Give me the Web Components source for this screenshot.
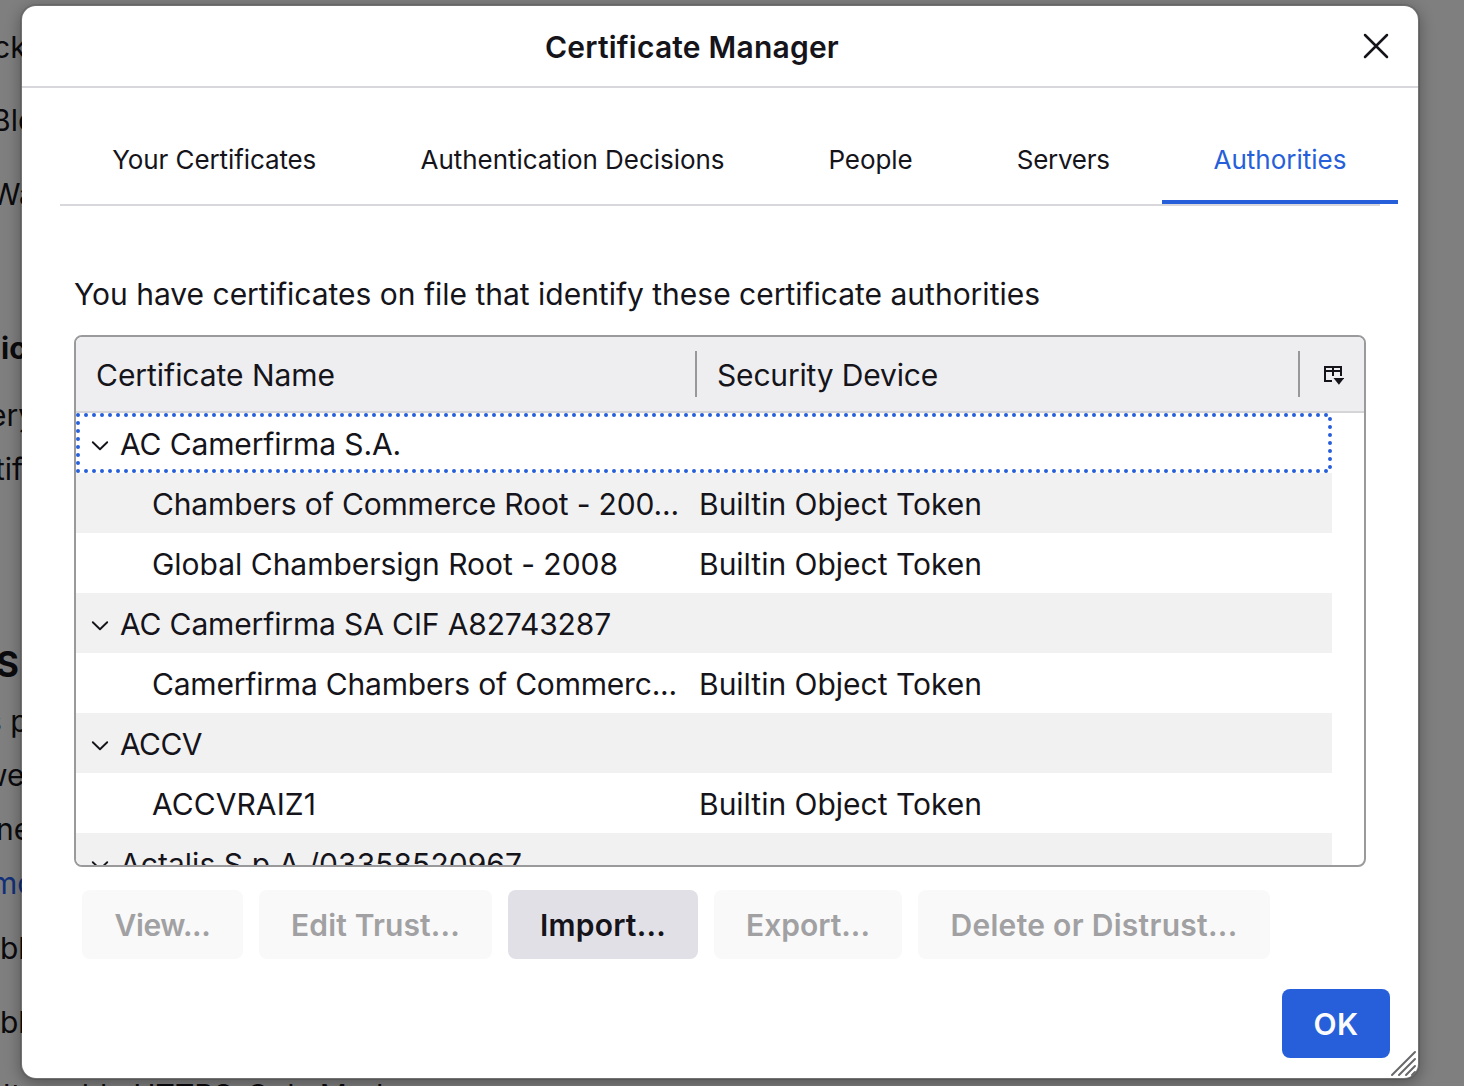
<!DOCTYPE html>
<html lang="en">
<head>
<meta charset="utf-8">
<title>Certificate Manager</title>
<style>
html,body{margin:0;height:1086px;overflow:hidden;background:#7f7f7f;font-family:Inter,"Liberation Sans",sans-serif;font-size:30px;font-weight:440;color:#15141a}
</style>
</head>
<body>
<cert-app></cert-app>
<script>
// Text run whose tracking is adjusted so that it spans the given width.
class FitText extends HTMLElement{
  connectedCallback(){
    if(!this.shadowRoot)this.attachShadow({mode:'open'}).innerHTML='<style>:host{display:inline-block;white-space:pre;line-height:1}span{display:inline-block}</style><span><slot></slot></span>';
    const s=this.shadowRoot.querySelector('span'),w=+this.getAttribute('w');
    if(w){const n=this.textContent.length;s.style.letterSpacing=((w-s.getBoundingClientRect().width)/n)+'px';}
  }
}
class PageBackdrop extends HTMLElement{
  connectedCallback(){
    const lines=[['ck',47,-7],['Blo',120,-9],['Wa',194,-9],['ic',348,1,'b'],['ery',415,-11],['tif',469,-5],['S',664,-4,'h'],['s p',721,-14],['we',775,-17],['ne',829,-4],['more',883,-9,'l'],['bl',948,0],['bl',1022,0],["Don't enable HTTPS-Only Mode",1095,-55]];
    let y=0,h='';
    for(const [t,c,x,k=''] of lines){h+=`<div class="${k}" style="margin-top:${c-20-y}px;text-indent:${x}px">${t}</div>`;y=c+20;}
    this.attachShadow({mode:'open'}).innerHTML=`<style>:host{display:block;height:1086px;overflow:hidden;background:#7f7f7f;color:#0b0a0d}div{height:40px;line-height:40px;white-space:nowrap}.b{font-weight:650}.h{font-weight:650;font-size:35px}.l{color:#12307a}</style><section style="display:flow-root">${h}</section>`;
  }
}
class DialogTab extends HTMLElement{
  connectedCallback(){
    this.attachShadow({mode:'open'}).innerHTML='<style>:host{display:flex;flex:none;box-sizing:border-box;height:116px;padding-top:31px;justify-content:center;align-items:center;font-size:26px;border-bottom:4px solid transparent}:host([selected]){color:#265fd9;border-color:#265fd9}</style><slot></slot>';
  }
}
class TreeRow extends HTMLElement{
  connectedCallback(){
    const child=this.hasAttribute('child'),n=this.getAttribute('name'),w=this.getAttribute('w');
    this.attachShadow({mode:'open'}).innerHTML=`<style>
    :host{display:flex;box-sizing:border-box;position:relative;flex:none;height:60px;width:1256px;align-items:center}
    :host(:nth-of-type(even)){background:#f1f1f2}
    .focus{position:absolute;inset:0}
    .name{flex:none;display:flex;align-items:center;box-sizing:border-box;width:623px;padding-left:${child?76:15}px;padding-top:2px}
    svg.t{margin:3px 11px 0 0;flex:none}
    .dev{padding-top:2px}
    </style><div class="name">${child?'':'<svg class="t" width="18" height="14" viewBox="0 0 18 14"><path d="M1.8 3.2 9 10.2 16.200 3.2" fill="none" stroke="#15141a" stroke-width="1.9" stroke-linecap="round" stroke-linejoin="round"/></svg>'}<fit-text w="${w}">${n}</fit-text></div>${child?'<div class="dev"><fit-text w="283">Builtin Object Token</fit-text></div>':''}${this.hasAttribute('focused')?'<svg class="focus" width="1256" height="60"><path d="M2 2H1254V58H2Z" fill="none" stroke="#265fd9" stroke-width="4" stroke-linecap="round" stroke-dasharray="0 8"/></svg>':''}`;
  }
}
class CertTree extends HTMLElement{
  connectedCallback(){
    this.attachShadow({mode:'open'}).innerHTML=`<style>
    :host{display:flex;flex-direction:column;box-sizing:border-box;width:1292px;height:532px;border:2px solid #9a9a9c;border-radius:8px;overflow:hidden;background:#fff}
    header{flex:none;display:flex;align-items:center;height:74px;background:#eeeef1;border-bottom:2px solid #d5d5d8}
    .c{box-sizing:border-box;height:46px;display:flex;align-items:center;padding:1px 0 0 20px;border-right:2px solid #98989b}
    .c1{width:621px}.c2{width:603px}
    .pick{flex:1;display:flex;padding:4px 0 0 24px}
    </style><header><div class="c c1"><fit-text w="239">Certificate Name</fit-text></div><div class="c c2"><fit-text w="221">Security Device</fit-text></div>
    <div class="pick"><svg width="20" height="20" viewBox="0 0 20 20"><path d="M8 15H1V1H17V10M1 5H17M9 1V10" fill="none" stroke="#15141a" stroke-width="2"/><path d="M9.500 12H20.200L14.900 18.700Z" fill="#15141a"/></svg></div></header>
    <tree-row focused name="AC Camerfirma S.A." w="281"></tree-row>
    <tree-row child name="Chambers of Commerce Root - 200..." w="527"></tree-row>
    <tree-row child name="Global Chambersign Root - 2008" w="466"></tree-row>
    <tree-row name="AC Camerfirma SA CIF A82743287" w="491"></tree-row>
    <tree-row child name="Camerfirma Chambers of Commerc..." w="525"></tree-row>
    <tree-row name="ACCV" w="82"></tree-row>
    <tree-row child name="ACCVRAIZ1" w="164"></tree-row>
    <tree-row name="Actalis S.p.A./03358520967" w="402"></tree-row>`;
  }
}
class DialogButton extends HTMLElement{
  connectedCallback(){
    this.attachShadow({mode:'open'}).innerHTML='<style>:host{display:flex;flex:none;height:69px;box-sizing:border-box;align-items:center;justify-content:center;border-radius:8px;background:#e0e0e6;font-weight:640}:host([disabled]){background:#f9f9f9;color:#a1a1a3}:host([primary]){background:#265fd9;color:#fbfbfe}</style><slot></slot>';
  }
}
class CertDialog extends HTMLElement{
  connectedCallback(){
    this.attachShadow({mode:'open'}).innerHTML=`<style>
    :host{display:flex;flex-direction:column;position:absolute;left:20px;top:4px;width:1396px;height:1072px;border:2px solid rgba(0,0,0,.1);border-radius:16px;background:#fff;background-clip:padding-box;box-shadow:0 4px 15px rgba(0,0,0,.32)}
    header{flex:none;height:80px;border-bottom:2px solid #d7d7dc;display:grid;grid-template-columns:1fr 56px;align-items:center;justify-items:center}
    h1{font-size:30px;font-weight:630;line-height:1;margin:2px 0 0}
    .close{justify-self:start}
    nav{flex:none;display:flex;width:1320px;margin-left:38px;border-bottom:2px solid #d7d7dc;box-sizing:border-box;height:118px}
    .cap{flex:none;height:30px;margin:70px 0 29px 52px}
    cert-tree{flex:none;margin-left:52px}
    .acts{display:flex;gap:16px;margin:23px 0 30px 60px}
    .ok{display:flex;justify-content:flex-end;padding-right:28px}
    .grip{position:absolute;right:1px;bottom:1px}
    </style>
    <header><h1><fit-text w="294">Certificate Manager</fit-text></h1><svg class="close" width="28" height="28" viewBox="0 0 28 28"><path d="M3 3 25 25M25 3 3 25" stroke="#15141a" stroke-width="2.500" stroke-linecap="round"/></svg></header>
    <nav>
    <dialog-tab style="width:308.5px"><fit-text w="204">Your Certificates</fit-text></dialog-tab>
    <dialog-tab style="width:408px"><fit-text w="304">Authentication Decisions</fit-text></dialog-tab>
    <dialog-tab style="width:188px"><fit-text w="84">People</fit-text></dialog-tab>
    <dialog-tab style="width:197.5px"><fit-text w="93">Servers</fit-text></dialog-tab>
    <dialog-tab selected style="width:236px"><fit-text w="133">Authorities</fit-text></dialog-tab></nav>
    <div class="cap"><fit-text w="966">You have certificates on file that identify these certificate authorities</fit-text></div>
    <cert-tree></cert-tree>
    <div class="acts">
    <dialog-button disabled style="width:161px"><fit-text w="96">View...</fit-text></dialog-button>
    <dialog-button disabled style="width:233px"><fit-text w="169">Edit Trust...</fit-text></dialog-button>
    <dialog-button style="width:190px"><fit-text w="126">Import...</fit-text></dialog-button>
    <dialog-button disabled style="width:188px"><fit-text w="124">Export...</fit-text></dialog-button>
    <dialog-button disabled style="width:352px"><fit-text w="287">Delete or Distrust...</fit-text></dialog-button></div>
    <div class="ok"><dialog-button primary style="width:108px"><fit-text w="45">OK</fit-text></dialog-button></div>
    <svg class="grip" width="28" height="28" viewBox="0 0 28 28"><path d="M3 26 26 3M10 26 26 10M17 26 26 17M23 26 26 23" stroke="#68686a" stroke-width="2" stroke-linecap="round"/></svg>`;
  }
}
class CertApp extends HTMLElement{
  connectedCallback(){
    this.attachShadow({mode:'open'}).innerHTML='<style>:host{display:block;position:relative;width:1464px;height:1086px;overflow:hidden}</style><page-backdrop></page-backdrop><cert-dialog></cert-dialog>';
  }
}
customElements.define('page-backdrop',PageBackdrop);
customElements.define('dialog-tab',DialogTab);
customElements.define('tree-row',TreeRow);
customElements.define('cert-tree',CertTree);
customElements.define('dialog-button',DialogButton);
customElements.define('cert-dialog',CertDialog);
customElements.define('cert-app',CertApp);
customElements.define('fit-text',FitText);
</script>
</body>
</html>
